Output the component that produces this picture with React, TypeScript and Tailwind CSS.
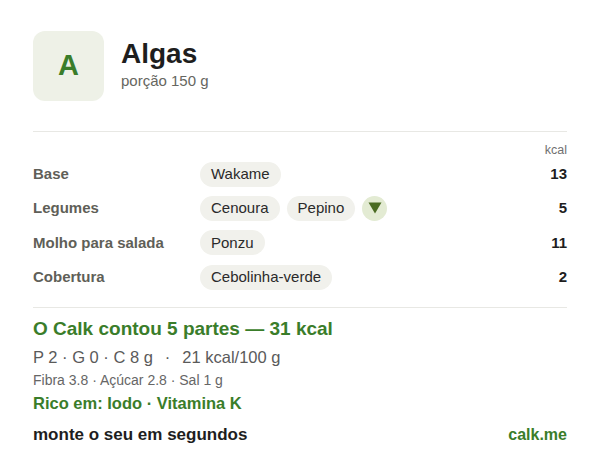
const rows: { label: string; items: string[]; kcal: number; more?: boolean }[] = [
    { label: 'Base', items: ['Wakame'], kcal: 13 },
    { label: 'Legumes', items: ['Cenoura', 'Pepino'], kcal: 5, more: true },
    { label: 'Molho para salada', items: ['Ponzu'], kcal: 11 },
    { label: 'Cobertura', items: ['Cebolinha-verde'], kcal: 2 },
];

export default function App() {
    return (
        <div
            className="w-[600px] h-[456px] bg-white px-[33px] pt-[31px] text-[#222]"
            style={{ fontFamily: '"Liberation Sans", Arial, sans-serif' }}
        >
            {/* header */}
            <div className="flex items-center gap-[17px]">
                <div className="flex h-[70px] w-[71px] items-center justify-center rounded-[12px] bg-[#eef1e7]">
                    <span className="text-[29px] font-bold text-[#3a7d2a]">A</span>
                </div>
                <div className="flex flex-col -mt-[4px]">
                    <h1 className="text-[28px] font-bold leading-[34px] text-[#1e1e1e]">Algas</h1>
                    <p className="text-[15px] leading-[20px] text-[#666660]">porção 150 g</p>
                </div>
            </div>

            <div className="mt-[30px] h-px bg-[#e8e8e4]" />

            {/* parts table */}
            <div className="mt-[11px] text-right text-[12.5px] leading-[14px] text-[#707070]">kcal</div>
            <div className="mt-[4px] flex flex-col gap-[8.4px]">
                {rows.map((r) => (
                    <div key={r.label} className="flex h-[26px] items-center">
                        <div className="w-[167px] text-[15px] font-bold text-[#5f5f58]">{r.label}</div>
                        <div className="flex flex-1 items-center gap-[7px]">
                            {r.items.map((it) => (
                                <span
                                    key={it}
                                    className="flex h-[25px] items-center rounded-full bg-[#f1f1ec] px-[11px] text-[15px] text-[#2a2a2a]"
                                >
                                    {it}
                                </span>
                            ))}
                            {r.more && (
                                <span className="flex h-[25px] w-[25px] items-center justify-center rounded-full bg-[#e3ebd3]">
                                    <svg width="14" height="12" viewBox="0 0 14 12">
                                        <path d="M0.5 0.5 H13.5 L7 11.5 Z" fill="#4a6b22" />
                                    </svg>
                                </span>
                            )}
                        </div>
                        <div className="text-[15px] font-bold text-[#1e1e1e]">{r.kcal}</div>
                    </div>
                ))}
            </div>

            <div className="mt-[17px] h-px bg-[#e8e8e4]" />

            {/* summary */}
            <div className="mt-[9px] text-[19px] font-bold leading-[24px] text-[#3a7d2a]">
                O Calk contou 5 partes — 31 kcal
            </div>
            <div className="mt-[5px] text-[16.5px] leading-[22px] text-[#5a5a5a]">
                P 2 · G 0 · C 8 g<span className="mx-[12px]">·</span>21 kcal/100 g
            </div>
            <div className="mt-[2px] text-[14px] leading-[20px] text-[#666]">
                Fibra 3.8 · Açúcar 2.8 · Sal 1 g
            </div>
            <div className="mt-[2px] text-[16.5px] font-bold leading-[22px] text-[#3a7d2a]">
                Rico em: Iodo · Vitamina K
            </div>

            <div className="mt-[8px] flex items-center justify-between">
                <span className="text-[17px] font-bold text-[#1e1e1e]">monte o seu em segundos</span>
                <span className="text-[16px] font-bold text-[#3a7d2a]">calk.me</span>
            </div>
        </div>
    );
}
